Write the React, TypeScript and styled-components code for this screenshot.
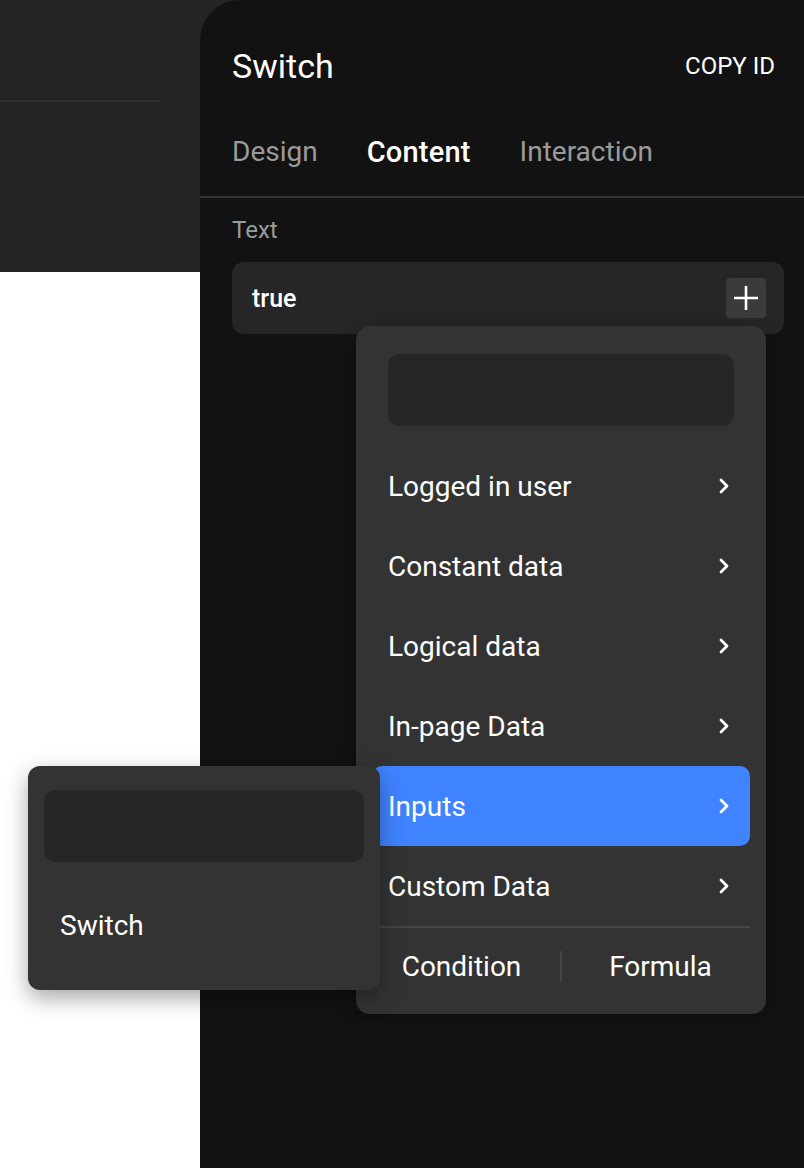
import React from "react";
import styled, { createGlobalStyle } from "styled-components";

const Global = createGlobalStyle`
  html, body { margin: 0; padding: 0; background: #ffffff; }
  body { font-family: "Roboto", "Liberation Sans", sans-serif; -webkit-font-smoothing: antialiased; }
  * { box-sizing: border-box; }
`;

const Root = styled.div`
  display: flex;
  width: 804px;
  height: 1168px;
  background: #242424;
  overflow: hidden;
`;

const Canvas = styled.div`
  width: 200px;
  flex: none;
  display: flex;
  flex-direction: column;
`;

const CanvasTop = styled.div`
  height: 272px;
  background: #242424;
  padding-top: 100px;
`;

const CanvasRule = styled.div`
  width: 160px;
  height: 2px;
  background: #323232;
`;

const CanvasBody = styled.div`
  flex: 1;
  background: #ffffff;
`;

const Panel = styled.div`
  flex: 1;
  background: #121212;
  border-top-left-radius: 40px;
  display: flex;
  flex-direction: column;
`;

const Header = styled.div`
  height: 110px;
  padding: 22px 29px 0 32px;
  display: flex;
  align-items: center;
  justify-content: space-between;
`;

const Title = styled.div`
  font-size: 34px;
  color: #ffffff;
  line-height: 40px;
`;

const CopyId = styled.div`
  font-size: 24px;
  color: #ffffff;
`;

const Tabs = styled.div`
  height: 88px;
  padding: 0 32px 2px;
  display: flex;
  align-items: center;
  gap: 49px;
  border-bottom: 2px solid #333333;
`;

const Tab = styled.div<{ $active?: boolean }>`
  font-size: ${(p) => (p.$active ? 29 : 28)}px;
  line-height: 34px;
  color: ${(p) => (p.$active ? "#ffffff" : "#9b9b9b")};
  font-weight: ${(p) => (p.$active ? 500 : 400)};
  letter-spacing: ${(p) => (p.$active ? 0.2 : 0)}px;
`;

const Section = styled.div`
  padding: 17px 20px 0 32px;
  display: flex;
  flex-direction: column;
  gap: 17px;
`;

const Label = styled.div`
  font-size: 24px;
  line-height: 30px;
  color: #9b9b9b;
`;

const FieldWrap = styled.div`
  position: relative;
`;

const Field = styled.div`
  height: 72px;
  border-radius: 12px;
  background: #262626;
  padding: 0 18px 0 20px;
  display: flex;
  align-items: center;
  justify-content: space-between;
`;

const FieldValue = styled.div`
  font-size: 25px;
  color: #ffffff;
  font-weight: 500;
`;

const PlusButton = styled.div`
  width: 40px;
  height: 40px;
  border-radius: 4px;
  background: #3b3b3b;
  display: flex;
  align-items: center;
  justify-content: center;
`;

const Menu = styled.div`
  position: absolute;
  top: 64px;
  left: 124px;
  width: 410px;
  height: 688px;
  background: #333333;
  border-radius: 14px;
  padding: 28px 16px 0;
  display: flex;
  flex-direction: column;
  box-shadow: 0 4px 16px rgba(0, 0, 0, 0.25);
`;

const Search = styled.div<{ $inset: number }>`
  height: 72px;
  margin: 0 ${(p) => p.$inset}px;
  border-radius: 12px;
  background: #262626;
  flex: none;
`;

const Items = styled.div`
  margin-top: 20px;
  display: flex;
  flex-direction: column;
`;

const Item = styled.div<{ $active?: boolean }>`
  position: relative;
  height: 80px;
  padding: 0 21px 0 16px;
  display: flex;
  align-items: center;
  justify-content: space-between;
  border-radius: 10px;
  background: ${(p) => (p.$active ? "#4083ff" : "transparent")};
  color: #ffffff;
  font-size: 28px;
`;

const Divider = styled.div`
  height: 2px;
  background: #454545;
`;

const Footer = styled.div`
  height: 76px;
  display: flex;
  align-items: center;
  gap: 9px;
`;

const FooterButton = styled.div`
  flex: 1;
  text-align: center;
  color: #ffffff;
  font-size: 28px;
`;

const VRule = styled.div`
  width: 2px;
  height: 31px;
  background: #444444;
`;

const SubMenu = styled.div`
  position: absolute;
  top: 0;
  left: -344px;
  width: 352px;
  height: 224px;
  background: #333333;
  border-radius: 12px;
  padding: 24px 16px 0;
  display: flex;
  flex-direction: column;
  box-shadow: 0 8px 22px rgba(0, 0, 0, 0.35);
  z-index: 2;
`;

const SubItem = styled.div`
  height: 126px;
  padding-left: 16px;
  display: flex;
  align-items: center;
  color: #ffffff;
  font-size: 28px;
`;

const Chevron = () => (
  <svg width="10" height="16" viewBox="0 0 10 16" fill="none">
    <path d="M2 2 L8 8 L2 14" stroke="#ffffff" strokeWidth="2.8" strokeLinecap="round" strokeLinejoin="round" />
  </svg>
);

const Plus = () => (
  <svg width="24" height="24" viewBox="0 0 24 24" fill="none">
    <path d="M12 0 V24 M0 12 H24" stroke="#ffffff" strokeWidth="2.6" />
  </svg>
);

const items = [
  "Logged in user",
  "Constant data",
  "Logical data",
  "In-page Data",
  "Inputs",
  "Custom Data",
];

export default function App() {
  return (
    <>
      <Global />
      <Root>
        <Canvas>
          <CanvasTop>
            <CanvasRule />
          </CanvasTop>
          <CanvasBody />
        </Canvas>
        <Panel>
          <Header>
            <Title>Switch</Title>
            <CopyId>COPY ID</CopyId>
          </Header>
          <Tabs>
            <Tab>Design</Tab>
            <Tab $active>Content</Tab>
            <Tab>Interaction</Tab>
          </Tabs>
          <Section>
            <Label>Text</Label>
            <FieldWrap>
              <Field>
                <FieldValue>true</FieldValue>
                <PlusButton>
                  <Plus />
                </PlusButton>
              </Field>
              <Menu>
                <Search $inset={16} />
                <Items>
                  {items.map((label) => (
                    <Item key={label} $active={label === "Inputs"}>
                      <span>{label}</span>
                      <Chevron />
                      {label === "Inputs" && (
                        <SubMenu>
                          <Search $inset={0} />
                          <SubItem>Switch</SubItem>
                        </SubMenu>
                      )}
                    </Item>
                  ))}
                </Items>
                <Divider />
                <Footer>
                  <FooterButton>Condition</FooterButton>
                  <VRule />
                  <FooterButton>Formula</FooterButton>
                </Footer>
              </Menu>
            </FieldWrap>
          </Section>
        </Panel>
      </Root>
    </>
  );
}
